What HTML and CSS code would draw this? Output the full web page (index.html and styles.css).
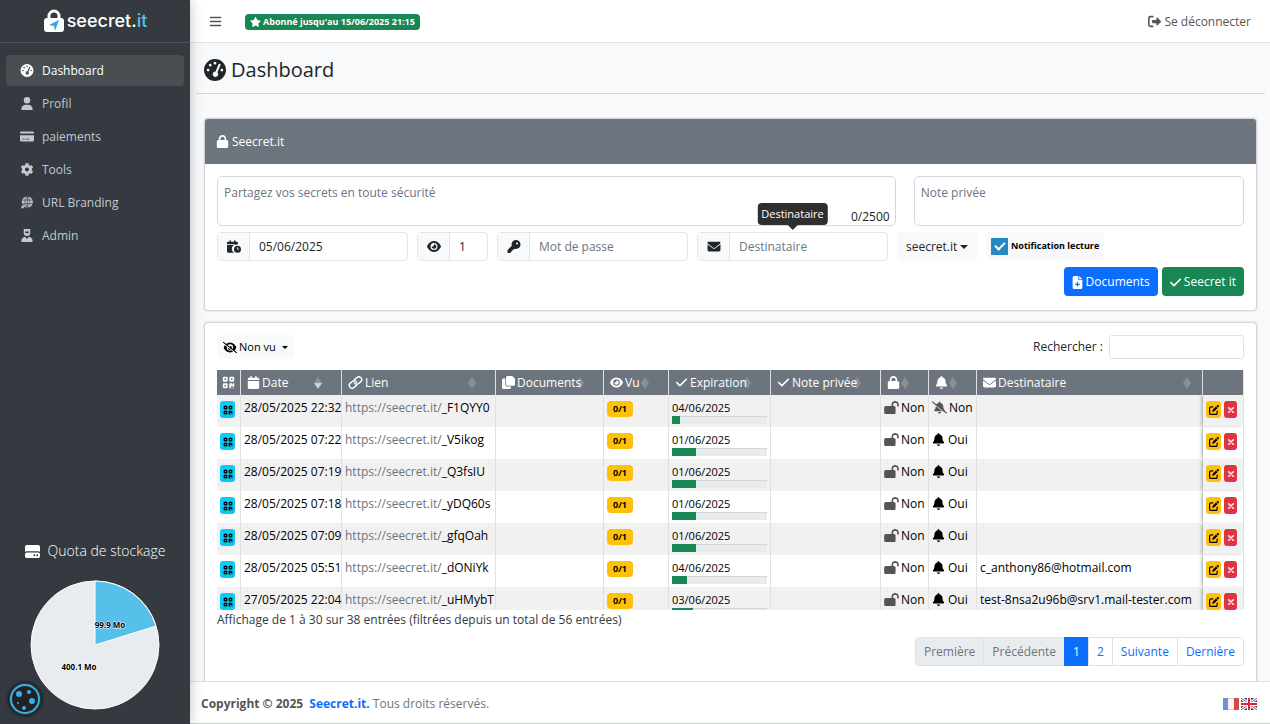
FILE: index.html
```
<!DOCTYPE html>
<html lang="fr">
<head>
    <meta charset="UTF-8">
    <meta name="viewport" content="width=device-width, initial-scale=1.0">
    <title>Seecret.it - Dashboard</title>
    <link rel="stylesheet" href="styles.css">
</head>
<body>

<!-- Icônes -->
<svg class="sprite" aria-hidden="true">
    <symbol id="i-lock" viewBox="0 0 448 512"><path d="M144 144v48H304V144c0-44.2-35.8-80-80-80s-80 35.8-80 80zM80 192V144C80 64.5 144.5 0 224 0s144 64.5 144 144v48h16c35.3 0 64 28.7 64 64V448c0 35.3-28.7 64-64 64H64c-35.3 0-64-28.7-64-64V256c0-35.3 28.7-64 64-64H80z"/></symbol>
    <symbol id="i-unlock" viewBox="0 0 576 512"><path d="M352 144c0-44 36-80 80-80s80 36 80 80v48c0 18 14 32 32 32s32-14 32-32v-48C576 64 512 0 432 0S288 64 288 144v48H64c-35 0-64 29-64 64v192c0 35 29 64 64 64h320c35 0 64-29 64-64V256c0-35-29-64-64-64h-32z"/></symbol>
    <symbol id="i-user" viewBox="0 0 448 512"><path d="M224 256A128 128 0 1 0 224 0a128 128 0 1 0 0 256zm-45.7 48C79.8 304 0 383.8 0 482.3C0 498.7 13.3 512 29.7 512H418.3c16.4 0 29.7-13.3 29.7-29.7C448 383.8 368.2 304 269.7 304H178.3z"/></symbol>
    <symbol id="i-admin" viewBox="0 0 448 512"><path fill-rule="evenodd" d="M96 0h256v150a128 128 0 0 1-256 0zM144 96v40l80 40 80-40V96zM150 304l74 90 74-90c86 8 150 80 150 178 0 17-13 30-30 30H30c-17 0-30-13-30-30 0-98 64-170 150-178z"/></symbol>
    <symbol id="i-check" viewBox="0 0 448 512"><path d="M438.6 105.4c12.5 12.5 12.5 32.8 0 45.3l-256 256c-12.5 12.5-32.8 12.5-45.3 0l-128-128c-12.5-12.5-12.5-32.8 0-45.3s32.8-12.5 45.3 0L160 338.7 393.4 105.4c12.5-12.5 32.8-12.5 45.3 0z"/></symbol>
    <symbol id="i-star" viewBox="0 0 576 512"><path d="M316.9 18C311.6 7 300.4 0 288.1 0s-23.4 7-28.8 18L195 150.3 51.4 171.5c-12 1.8-22 10.2-25.7 21.7s-.7 24.2 7.9 32.7L137.8 329 113.2 474.7c-2 12 3 24.2 12.9 31.3s23 8 33.8 2.3l128.3-68.5 128.3 68.5c10.8 5.7 23.9 4.9 33.8-2.3s14.9-19.3 12.9-31.3L438.5 329 542.7 225.9c8.6-8.5 11.7-21.2 7.9-32.7s-13.7-19.9-25.7-21.7L381.2 150.3 316.9 18z"/></symbol>
    <symbol id="i-bell" viewBox="0 0 448 512"><path d="M224 0c-17.7 0-32 14.3-32 32V51.2C119 66 64 130.6 64 208v18.8c0 47-17.3 92.4-48.5 127.6l-7.4 8.3c-8.4 9.4-10.4 22.9-5.3 34.4S19.4 416 32 416H416c12.6 0 24-7.4 29.2-18.9s3.1-25-5.3-34.4l-7.4-8.3C401.3 319.2 384 273.9 384 226.8V208c0-77.4-55-142-128-156.8V32c0-17.7-14.3-32-32-32zm45.3 493.3c12-12 18.7-28.3 18.7-45.3H160c0 17 6.7 33.3 18.7 45.3s28.3 18.7 45.3 18.7s33.3-6.7 45.3-18.7z"/></symbol>
    <symbol id="i-bell-slash" viewBox="0 0 640 512"><path d="M320 0c-18 0-32 14-32 32v19c-73 15-128 79-128 157v19c0 47-17 92-49 127l-7 8c-9 10-11 23-6 35s17 19 30 19h384c13 0 24-8 29-19s3-25-5-35l-8-8c-31-35-48-80-48-127v-19c0-78-55-142-128-157V32c0-18-14-32-32-32zM256 448c0 35 29 64 64 64s64-29 64-64z"/><path d="M40 70l580 456" stroke="#f1f1f2" stroke-width="50"/><path d="M24 24l592 464" stroke="currentColor" stroke-width="48" stroke-linecap="round"/></symbol>
    <symbol id="i-envelope" viewBox="0 0 512 512"><path d="M48 64C21.5 64 0 85.5 0 112c0 15.1 7.1 29.3 19.2 38.4L236.8 313.6c11.4 8.5 27 8.5 38.4 0L492.8 150.4c12.1-9.1 19.2-23.3 19.2-38.4c0-26.5-21.5-48-48-48H48zM0 176V384c0 35.3 28.7 64 64 64H448c35.3 0 64-28.7 64-64V176L294.4 339.2c-22.8 17.1-54 17.1-76.8 0L0 176z"/></symbol>
    <symbol id="i-key" viewBox="0 0 512 512"><path d="M336 352c97.2 0 176-78.8 176-176S433.2 0 336 0S160 78.8 160 176c0 18.7 2.9 36.8 8.3 53.7L7 391c-4.5 4.5-7 10.6-7 17v80c0 13.3 10.7 24 24 24h80c13.3 0 24-10.7 24-24V448h40c13.3 0 24-10.7 24-24V384h40c6.4 0 12.5-2.5 17-7l33.3-33.3c16.9 5.4 35 8.3 53.7 8.3zM376 96a40 40 0 1 1 0 80 40 40 0 1 1 0-80z"/></symbol>
    <symbol id="i-eye" viewBox="0 0 576 512"><path d="M288 32c-80.8 0-145.5 36.8-192.6 80.6C48.6 156 17.3 208 2.5 243.7c-3.3 7.9-3.3 16.7 0 24.6C17.3 304 48.6 356 95.4 399.4C142.5 443.2 207.2 480 288 480s145.5-36.8 192.6-80.6c46.8-43.5 78.1-95.4 93-131.1c3.3-7.9 3.3-16.7 0-24.6c-14.9-35.7-46.2-87.7-93-131.1C433.5 68.8 368.8 32 288 32zM144 256a144 144 0 1 1 288 0 144 144 0 1 1 -288 0zm144-64c0 35.3-28.7 64-64 64c-7.1 0-13.9-1.2-20.3-3.3c-5.5-1.8-11.9 1.6-11.7 7.4c.3 6.9 1.3 13.8 3.2 20.7c13.7 51.2 66.4 81.6 117.6 67.9s81.6-66.4 67.9-117.6c-11.1-41.5-47.8-69.4-88.6-71.1c-5.8-.2-9.2 6.1-7.4 11.7c2.1 6.4 3.3 13.2 3.3 20.3z"/></symbol>
    <symbol id="i-eye-slash" viewBox="0 0 640 512"><path fill-rule="evenodd" d="M320 32c-140 0-246 110-286 212-3 8-3 16 0 24 40 102 146 212 286 212s246-110 286-212c3-8 3-16 0-24C566 142 460 32 320 32zm0 80a144 144 0 1 1 0 288 144 144 0 1 1 0-288zm0 80a64 64 0 0 1-90 74 92 92 0 1 0 90-74z"/><path d="M10 60l592 464" stroke="#f8f9fa" stroke-width="56"/><path d="M24 24l592 464" stroke="currentColor" stroke-width="50" stroke-linecap="round"/></symbol>
    <symbol id="i-cog" viewBox="0 0 512 512"><path d="M487.4 315.7l-42.6-24.6c4.3-23.2 4.3-47 0-70.2l42.6-24.6c4.9-2.8 7.1-8.6 5.5-14-11.1-35.6-30-67.8-54.7-94.6-3.8-4.1-10-5.1-14.8-2.3L380.8 110c-17.9-15.4-38.5-27.3-60.8-35.1V25.8c0-5.6-3.9-10.5-9.4-11.7-36.7-8.2-74.3-7.8-109.2 0-5.5 1.2-9.4 6.1-9.4 11.7V75c-22.2 7.9-42.8 19.8-60.8 35.1L88.7 85.5c-4.9-2.8-11-1.9-14.8 2.3-24.7 26.7-43.6 58.9-54.7 94.6-1.7 5.4.6 11.2 5.5 14L67.3 221c-4.3 23.2-4.3 47 0 70.2l-42.6 24.6c-4.9 2.8-7.1 8.6-5.5 14 11.1 35.6 30 67.8 54.7 94.6 3.8 4.1 10 5.1 14.8 2.3l42.6-24.6c17.9 15.4 38.5 27.3 60.8 35.1v49.2c0 5.6 3.9 10.5 9.4 11.7 36.7 8.2 74.3 7.8 109.2 0 5.5-1.2 9.4-6.1 9.4-11.7v-49.2c22.2-7.9 42.8-19.8 60.8-35.1l42.6 24.6c4.9 2.8 11 1.9 14.8-2.3 24.7-26.7 43.6-58.9 54.7-94.6 1.5-5.5-.7-11.3-5.6-14.1zM256 336c-44.1 0-80-35.9-80-80s35.9-80 80-80 80 35.9 80 80-35.9 80-80 80z"/></symbol>
    <symbol id="i-gauge" viewBox="0 0 512 512"><path fill-rule="evenodd" d="M256 0a256 256 0 1 1 0 512 256 256 0 1 1 0-512zM256 64a32 32 0 1 0 0 64 32 32 0 1 0 0-64zM144 112a32 32 0 1 0 0 64 32 32 0 1 0 0-64zM96 224a32 32 0 1 0 0 64 32 32 0 1 0 0-64zM416 224a32 32 0 1 0 0 64 32 32 0 1 0 0-64zM371 112a24 24 0 0 0-31 12L268 290a64 64 0 1 0 44 19l71-166a24 24 0 0 0-12-31z"/></symbol>
    <symbol id="i-card" viewBox="0 0 576 512"><path fill-rule="evenodd" d="M64 48h448c35 0 64 20 64 50v34H0V98c0-30 29-50 64-50zM0 208h576v190c0 36-29 64-64 64H64c-35 0-64-28-64-64zM96 346v36h96v-36zM230 346v36h150v-36z"/></symbol>
    <symbol id="i-globe" viewBox="0 0 512 512"><circle cx="270" cy="236" r="220"/><path d="M50 160h440M50 300h440M270 10v450M270 16c-130 130-130 310 0 440M270 16c130 130 130 310 0 440" fill="none" stroke="#343a40" stroke-width="26"/><path d="M10 500l30-150 50 40 80-90 60 50-90 90 40 40z" stroke="#343a40" stroke-width="24"/></symbol>
    <symbol id="i-disk" viewBox="0 0 512 512"><path fill-rule="evenodd" d="M64 32h384c35 0 64 29 64 64v170c-19-11-41-17-64-17H64c-23 0-45 6-64 17V96c0-35 29-64 64-64zM64 288h384c35 0 64 29 64 64v64c0 35-29 64-64 64H64c-35 0-64-29-64-64v-64c0-35 29-64 64-64zM320 352a32 32 0 1 0 0 64 32 32 0 1 0 0-64zM416 352a32 32 0 1 0 0 64 32 32 0 1 0 0-64z"/></symbol>
    <symbol id="i-logout" viewBox="0 0 512 512"><path d="M190 448H96c-35 0-64-29-64-64V128c0-35 29-64 64-64h94" fill="none" stroke="currentColor" stroke-width="62" stroke-linecap="round"/><path d="M504 239L378 105c-18-18-50-6-50 22v65H192c-18 0-32 14-32 32v64c0 18 14 32 32 32h136v65c0 28 32 40 50 22l126-134c10-10 10-24 0-34z"/></symbol>
    <symbol id="i-calendar" viewBox="0 0 448 512"><path d="M96 32v32H48C21 64 0 85 0 112v48h448v-48c0-27-21-48-48-48h-48V32c0-18-14-32-32-32s-32 14-32 32v32H160V32c0-18-14-32-32-32S96 14 96 32zM448 192H0v272c0 27 21 48 48 48h352c27 0 48-21 48-48z"/></symbol>
    <symbol id="i-calendar-clock" viewBox="0 0 576 512"><path d="M96 32v32H48C21 64 0 85 0 112v48h448v-48c0-27-21-48-48-48h-48V32c0-18-14-32-32-32s-32 14-32 32v32H160V32c0-18-14-32-32-32S96 14 96 32zM448 192H0v272c0 27 21 48 48 48h250a176 176 0 0 1 150-320z"/><path fill-rule="evenodd" d="M432 224a144 144 0 1 1 0 288 144 144 0 1 1 0-288zM416 288v96h80v-32h-48v-64z"/></symbol>
    <symbol id="i-link" viewBox="0 0 640 512"><g fill="none" stroke="currentColor" stroke-width="62" stroke-linecap="round" transform="rotate(-40 320 256)"><path d="M300 376H160a120 120 0 0 1 0-240h110a120 120 0 0 1 118 140" transform="translate(-26 0)"/><path d="M340 136h140a120 120 0 0 1 0 240H370a120 120 0 0 1-118-140" transform="translate(26 0)"/></g></symbol>
    <symbol id="i-copy" viewBox="0 0 512 512"><path d="M224 0c-35 0-64 29-64 64v256c0 35 29 64 64 64h224c35 0 64-29 64-64V110L402 0zM64 96c-35 0-64 29-64 64v288c0 35 29 64 64 64h224c35 0 64-29 64-64v-32H224c-53 0-96-43-96-96V96z"/></symbol>
    <symbol id="i-file-plus" viewBox="0 0 384 512"><path fill-rule="evenodd" d="M64 0c-35 0-64 29-64 64v384c0 35 29 64 64 64h256c35 0 64-29 64-64V160H256c-18 0-32-14-32-32V0zM256 0v128h128zM168 240h48v64h64v48h-64v64h-48v-64h-64v-48h64z"/></symbol>
    <symbol id="i-qr" viewBox="0 0 448 512"><path fill-rule="evenodd" d="M48 32h96c27 0 48 21 48 48v96c0 27-21 48-48 48H48c-27 0-48-21-48-48V80c0-27 21-48 48-48zm16 64v64h64V96zM304 32h96c27 0 48 21 48 48v96c0 27-21 48-48 48h-96c-27 0-48-21-48-48V80c0-27 21-48 48-48zm16 64v64h64V96zM48 288h96c27 0 48 21 48 48v96c0 27-21 48-48 48H48c-27 0-48-21-48-48v-96c0-27 21-48 48-48zm16 64v64h64v-64zM256 288h110v48h32v-48h50v128h-112v-32h-16v96h-64zM352 448h32v32h-32zM416 448h32v32h-32z"/></symbol>
    <symbol id="i-edit" viewBox="0 0 512 512"><path d="M200 96H96c-35 0-64 29-64 64v256c0 35 29 64 64 64h256c35 0 64-29 64-64V312" fill="none" stroke="currentColor" stroke-width="62" stroke-linecap="round"/><path d="M410 20c22-22 56-22 78 0l4 4c22 22 22 56 0 78l-30 30-82-82zM358 72l82 82-166 166-114 32 32-114z"/></symbol>
    <symbol id="i-times" viewBox="0 0 384 512"><path d="M72 136l240 240M312 136L72 376" fill="none" stroke="currentColor" stroke-width="70" stroke-linecap="round"/></symbol>
    <symbol id="i-bars" viewBox="0 0 448 512"><path d="M24 96h400M24 256h400M24 416h400" fill="none" stroke="currentColor" stroke-width="56" stroke-linecap="round"/></symbol>
</svg>

<aside class="sidebar">
    <a class="brand" href="#">
        <svg class="brand-lock" viewBox="0 0 22 24"><path d="M6 11V7a5 5 0 0 1 10 0v4" fill="none" stroke="#fff" stroke-width="3"/><rect x="1" y="9" width="20" height="14" rx="3" fill="#fff"/><path d="M16 11L6 16l5 1 1 5z" fill="#35a9dc"/></svg>
        <span>seecret.<span class="brand-it">it</span></span>
    </a>
    <nav class="menu">
        <a class="menu-item active" href="#"><svg class="icon"><use href="#i-gauge"/></svg>Dashboard</a>
        <a class="menu-item" href="#"><svg class="icon"><use href="#i-user"/></svg>Profil</a>
        <a class="menu-item" href="#"><svg class="icon"><use href="#i-card"/></svg>paiements</a>
        <a class="menu-item" href="#"><svg class="icon"><use href="#i-cog"/></svg>Tools</a>
        <a class="menu-item" href="#"><svg class="icon"><use href="#i-globe"/></svg>URL Branding</a>
        <a class="menu-item" href="#"><svg class="icon"><use href="#i-admin"/></svg>Admin</a>
    </nav>
    <div class="quota">
        <h2><svg class="icon"><use href="#i-disk"/></svg>Quota de stockage</h2>
        <svg class="pie" viewBox="0 0 130 130">
            <circle cx="65" cy="65" r="64" fill="#e9ecef" stroke="#fff"/>
            <path d="M65 65V1A64 64 0 0 1 126 46z" fill="#56c0ea" stroke="#fff"/>
            <text x="80" y="48">99.9 Mo</text>
            <text x="49" y="90">400.1 Mo</text>
        </svg>
    </div>
    <button class="cookie" aria-label="Cookies">
        <svg viewBox="0 0 32 32"><circle cx="16" cy="16" r="14" fill="#222" stroke="#35b0e8" stroke-width="2"/><g fill="#35b0e8"><circle cx="10" cy="11" r="3"/><circle cx="20" cy="9" r="2"/><circle cx="23" cy="18" r="3"/><circle cx="15" cy="25" r="2"/><circle cx="9" cy="20" r="1"/></g></svg>
    </button>
</aside>

<div class="page">
    <header class="navbar">
        <button class="toggle" aria-label="Menu"><svg class="icon"><use href="#i-bars"/></svg></button>
        <span class="badge-sub"><svg class="icon"><use href="#i-star"/></svg>Abonné jusqu'au 15/06/2025 21:15</span>
        <a class="logout" href="#"><svg class="icon"><use href="#i-logout"/></svg>Se déconnecter</a>
    </header>

    <main class="content">
        <h1><svg class="icon"><use href="#i-gauge"/></svg>Dashboard</h1>

        <section class="card">
            <div class="card-header"><svg class="icon"><use href="#i-lock"/></svg>Seecret.it</div>
            <form class="card-body">
                <div class="row-text">
                    <div class="secret">
                        <textarea class="field" placeholder="Partagez vos secrets en toute sécurité" aria-label="Secret"></textarea>
                        <span class="counter">0/2500</span>
                    </div>
                    <textarea class="field" placeholder="Note privée" aria-label="Note privée"></textarea>
                </div>
                <div class="row-options">
                    <div class="group">
                        <label for="date"><svg class="icon"><use href="#i-calendar-clock"/></svg></label>
                        <input id="date" type="text" value="05/06/2025">
                    </div>
                    <div class="group small">
                        <label for="views"><svg class="icon"><use href="#i-eye"/></svg></label>
                        <input id="views" type="text" value="1">
                    </div>
                    <div class="group">
                        <label for="pass"><svg class="icon"><use href="#i-key"/></svg></label>
                        <input id="pass" type="text" placeholder="Mot de passe">
                    </div>
                    <div class="group">
                        <label for="dest"><svg class="icon"><use href="#i-envelope"/></svg></label>
                        <input id="dest" type="text" placeholder="Destinataire">
                        <div class="tooltip">Destinataire</div>
                    </div>
                    <div class="dropdown domain">
                        <select aria-label="Domaine"><option>seecret.it</option></select>
                    </div>
                    <label class="notif"><input type="checkbox" checked>Notification lecture</label>
                </div>
                <div class="row-buttons">
                    <button type="button" class="btn blue"><svg class="icon"><use href="#i-file-plus"/></svg>Documents</button>
                    <button type="button" class="btn green"><svg class="icon"><use href="#i-check"/></svg>Seecret it</button>
                </div>
            </form>
        </section>

        <section class="card list">
            <div class="card-body">
                <div class="toolbar">
                    <div class="dropdown filter">
                        <svg class="icon"><use href="#i-eye-slash"/></svg>
                        <select aria-label="Filtre"><option>Non vu</option></select>
                    </div>
                    <label class="search">Rechercher : <input type="text"></label>
                </div>
                <div class="table-scroll">
                    <table>
                        <thead>
                            <tr>
                                <th class="c-qr"><svg class="icon"><use href="#i-qr"/></svg></th>
                                <th class="c-date"><div class="th sorted"><span><svg class="icon"><use href="#i-calendar"/></svg>Date</span></div></th>
                                <th class="c-link"><div class="th"><span><svg class="icon wide"><use href="#i-link"/></svg>Lien</span></div></th>
                                <th class="c-docs"><div class="th"><span><svg class="icon"><use href="#i-copy"/></svg>Documents</span></div></th>
                                <th class="c-seen"><div class="th"><span><svg class="icon"><use href="#i-eye"/></svg>Vu</span></div></th>
                                <th class="c-exp"><div class="th"><span><svg class="icon"><use href="#i-check"/></svg>Expiration</span></div></th>
                                <th class="c-note"><div class="th"><span><svg class="icon"><use href="#i-check"/></svg>Note privée</span></div></th>
                                <th class="c-flag"><div class="th"><span><svg class="icon"><use href="#i-lock"/></svg></span></div></th>
                                <th class="c-flag"><div class="th"><span><svg class="icon"><use href="#i-bell"/></svg></span></div></th>
                                <th class="c-dest"><div class="th"><span><svg class="icon"><use href="#i-envelope"/></svg>Destinataire</span></div></th>
                                <th class="c-act"></th>
                            </tr>
                        </thead>
                        <tbody id="rows"></tbody>
                    </table>
                </div>
                <div class="info">Affichage de 1 à 30 sur 38 entrées (filtrées depuis un total de 56 entrées)</div>
                <nav class="pagination">
                    <a class="disabled" href="#">Première</a>
                    <a class="disabled" href="#">Précédente</a>
                    <a class="current" href="#">1</a>
                    <a href="#">2</a>
                    <a href="#">Suivante</a>
                    <a href="#">Dernière</a>
                </nav>
            </div>
        </section>
    </main>

    <footer class="footer">
        <div><strong>Copyright © 2025 <a href="#">Seecret.it.</a></strong> Tous droits réservés.</div>
        <div class="flags">
            <a href="#" aria-label="Français"><svg viewBox="0 0 16 12"><rect width="16" height="12" fill="#f4f4f4"/><rect width="5" height="12" fill="#6f8fd0"/><rect x="11" width="5" height="12" fill="#e0413c"/><rect x=".5" y=".5" width="15" height="11" fill="none" stroke="#8885" /></svg></a>
            <a href="#" aria-label="English"><svg viewBox="0 0 16 12"><rect width="16" height="12" fill="#3d5aa5"/><path d="M0 0l16 12M16 0L0 12" stroke="#fff" stroke-width="3"/><path d="M0 0l16 12M16 0L0 12" stroke="#d8404f"/><path d="M8 0v12M0 6h16" stroke="#fff" stroke-width="4"/><path d="M8 0v12M0 6h16" stroke="#d5283c" stroke-width="2"/></svg></a>
        </div>
    </footer>
</div>

<script src="script.js"></script>
</body>
</html>
```
FILE: styles.css
```
* {
    box-sizing: border-box;
}

body {
    display: flex;
    height: 100vh;
    margin: 0;
    overflow: hidden;
    font-family: "Open Sans", "Noto Sans", sans-serif;
    font-size: 12px;
    line-height: 18px;
    color: #212529;
    background-color: #f8f9fa;
}

a {
    color: #0d6efd;
    text-decoration: none;
}

button, input, select, textarea {
    font: inherit;
    color: inherit;
}

.sprite {
    position: absolute;
    width: 0;
    height: 0;
}

.icon {
    flex: none;
    width: 13px;
    height: 13px;
    fill: currentColor;
    vertical-align: -2px;
}

.icon.wide {
    width: 15px;
}

/* Menu latéral */
.sidebar {
    position: relative;
    display: flex;
    flex-direction: column;
    flex: none;
    width: 190px;
    background-color: #343a40;
    box-shadow: 0 0 12px rgba(0, 0, 0, 0.25);
}

.brand {
    display: flex;
    align-items: center;
    justify-content: center;
    height: 43px;
    border-bottom: 1px solid #4b545c;
    font-family: Inter, sans-serif;
    font-size: 18px;
    font-weight: 500;
    color: #fff;
}

.brand-lock {
    width: 22px;
    height: 24px;
    margin-right: 2px;
}

.brand-it {
    color: #56c0ea;
}

.menu {
    display: flex;
    flex-direction: column;
    gap: 2px;
    padding: 12px 6px;
}

.menu-item {
    display: flex;
    align-items: center;
    gap: 8px;
    height: 31px;
    padding: 0 14px;
    border-radius: 4px;
    color: #c2c7d0;
}

.menu-item .icon {
    width: 14px;
}

.menu-item.active {
    color: #fff;
    background-color: #494e53;
}

.quota {
    margin-top: auto;
    padding-bottom: 14px;
    text-align: center;
}

.quota h2 {
    display: flex;
    align-items: center;
    justify-content: center;
    gap: 8px;
    margin: 0 0 20px;
    font-size: 14px;
    font-weight: 300;
    color: #fff;
}

.quota .icon {
    width: 15px;
    height: 15px;
}

.pie {
    display: block;
    width: 130px;
    height: 130px;
    margin: 0 auto;
}

.pie text {
    font-size: 8px;
    font-weight: 700;
    text-anchor: middle;
    stroke: #fff;
    stroke-width: 1px;
    paint-order: stroke;
}

.cookie {
    position: absolute;
    left: 9px;
    bottom: 9px;
    width: 32px;
    height: 32px;
    padding: 0;
    border: none;
    border-radius: 50%;
    background: none;
    box-shadow: 0 0 4px #000;
}

.cookie svg {
    display: block;
}

/* Page */
.page {
    display: flex;
    flex-direction: column;
    flex: 1;
    min-width: 0;
}

.navbar {
    display: flex;
    align-items: center;
    flex: none;
    height: 43px;
    padding: 2px 19px 0;
    border-bottom: 1px solid #dee2e6;
    background-color: #fff;
    color: #555;
}

.toggle {
    padding: 0;
    border: none;
    background: none;
}

.badge-sub {
    display: flex;
    align-items: center;
    gap: 2px;
    height: 16px;
    margin-left: 23px;
    padding: 0 5px;
    border-radius: 4px;
    background-color: #198754;
    font-size: 9px;
    font-weight: 700;
    color: #fff;
}

.badge-sub .icon {
    width: 11px;
    height: 10px;
}

.logout {
    margin-left: auto;
    color: #555;
}

.logout .icon {
    margin-right: 3px;
}

.content {
    flex: 1;
    min-height: 0;
    overflow: hidden;
}

h1 {
    display: flex;
    align-items: center;
    gap: 5px;
    height: 51px;
    margin: 0 5px 24px 6px;
    padding: 3px 0 0 8px;
    border-bottom: 1px solid #d3d6da;
    font-size: 20px;
    font-weight: 400;
}

h1 .icon {
    width: 22px;
    height: 22px;
}

.card {
    margin: 0 13px 11px 14px;
    border: 1px solid #d3d5d8;
    border-radius: 4px;
    background-color: #fff;
    box-shadow: 0 0 2px rgba(0, 0, 0, 0.2);
}

.card-header {
    display: flex;
    align-items: center;
    gap: 3px;
    height: 45px;
    padding: 0 11px;
    border-radius: 3px 3px 0 0;
    background-color: #6c757d;
    color: #fff;
}

.card-body {
    padding: 12px;
}

/* La liste continue sous le pied de page */
.list {
    padding-bottom: 12px;
}

/* Formulaire */
.row-text {
    display: grid;
    grid-template-columns: 678fr 330fr;
    gap: 18px;
}

.secret {
    position: relative;
}

.field {
    display: block;
    width: 100%;
    height: 50px;
    padding: 7px 6px;
    border: 1px solid #d5d9de;
    border-radius: 5px;
    resize: none;
}

::placeholder {
    color: #6c757d;
    opacity: 1;
}

.counter {
    position: absolute;
    right: 6px;
    bottom: 0;
}

.row-options {
    display: flex;
    gap: 9px;
    margin-top: 6px;
}

.group {
    position: relative;
    display: flex;
    width: 191px;
    height: 29px;
    border: 1px solid #e3e6ea;
    border-radius: 4px;
}

.group.small {
    width: 71px;
}

.group label {
    display: flex;
    align-items: center;
    justify-content: center;
    flex: none;
    width: 32px;
    border-right: 1px solid #e3e6ea;
    background-color: #f8f9fa;
}

.group label .icon {
    width: 14px;
}

.group input {
    flex: 1;
    min-width: 0;
    padding: 1px 9px 0;
    border: none;
    border-radius: 4px;
    background: none;
}

.tooltip {
    position: absolute;
    left: 50%;
    bottom: calc(100% + 8px);
    height: 22px;
    padding: 2px 4px;
    border-radius: 4px;
    background-color: #2f2f2f;
    font-size: 11px;
    color: #fff;
    transform: translateX(-50%);
}

.tooltip::after {
    content: "";
    position: absolute;
    left: 50%;
    top: 100%;
    margin-left: -5px;
    border: 5px solid transparent;
    border-top-color: #2f2f2f;
    border-bottom: none;
}

.dropdown {
    display: flex;
    align-items: center;
    border-radius: 4px;
    background-color: #f8f9fa;
}

.dropdown select {
    padding: 0;
    border: none;
    background: none;
    appearance: none;
}

.dropdown::after {
    content: "";
    border: 4px solid transparent;
    border-top-color: currentColor;
    border-bottom: none;
}

.domain {
    gap: 2px;
    height: 29px;
    padding: 0 9px;
}

.notif {
    display: flex;
    align-items: center;
    gap: 3px;
    height: 28px;
    padding: 0 5px;
    border-radius: 4px;
    background-color: #f8f9fa;
    font-size: 9px;
    font-weight: 700;
    color: #000;
}

.notif input {
    display: flex;
    align-items: center;
    justify-content: center;
    width: 17px;
    height: 17px;
    margin: 0;
    background-color: #2489c5;
    appearance: none;
}

.notif input:checked::after {
    content: "";
    width: 8px;
    height: 4px;
    margin-bottom: 3px;
    border-left: 2px solid #fff;
    border-bottom: 2px solid #fff;
    transform: rotate(-45deg);
}

.row-buttons {
    display: flex;
    justify-content: flex-end;
    gap: 4px;
    margin: 6px 0 2px;
}

.btn {
    display: flex;
    align-items: center;
    gap: 3px;
    height: 29px;
    padding: 1px 8px 0;
    border: none;
    border-radius: 4px;
    color: #fff;
}

.btn.blue {
    background-color: #0d6efd;
}

.btn.green {
    background-color: #198754;
}

.btn .icon {
    width: 11px;
}

/* Liste */
.toolbar {
    display: flex;
    align-items: center;
    justify-content: space-between;
}

.filter {
    gap: 2px;
    height: 24px;
    padding: 0 6px;
    font-size: 11px;
    color: #000;
}

.filter .icon {
    width: 14px;
}

.filter select {
    padding-right: 4px;
}

.filter::after {
    border-width: 3px;
    border-bottom: none;
}

.search {
    display: flex;
    align-items: center;
    gap: 6px;
}

.search input {
    width: 135px;
    height: 24px;
    border: 1px solid #dee2e6;
    border-radius: 3px;
}

.table-scroll {
    height: 240px;
    margin-top: 11px;
    overflow: hidden;
}

table {
    width: 100%;
    border-collapse: separate;
    border-spacing: 0;
    table-layout: fixed;
    color: #000;
}

th, td {
    padding: 0 3px;
    border-right: 1px solid #dee2e6;
    text-align: left;
    white-space: nowrap;
}

th {
    height: 25px;
    padding: 1px 6px 0;
    background-color: #6c757d;
    font-weight: 400;
    color: #fff;
}

td {
    height: 32px;
    padding-top: 4px;
    vertical-align: top;
}

tbody tr:nth-child(odd) {
    background-color: #f1f1f2;
}

.c-qr { width: 24px; }
.c-date { width: 101px; }
.c-link { width: 154px; }
.c-docs { width: 108px; }
.c-seen { width: 65px; }
.c-exp { width: 102px; }
.c-note { width: 110px; }
.c-flag { width: 48px; }
.c-act { width: 41px; }

td.c-date {
    padding-right: 0;
}

th .icon {
    margin-right: 2px;
}

.th {
    display: flex;
    align-items: center;
    justify-content: space-between;
    padding-right: 13px;
}

.th > span {
    position: relative;
    z-index: 1;
    width: 0;
}

/* Flèches de tri */
.th::after {
    content: "";
    flex: none;
    width: 8px;
    height: 12px;
    background-color: #889097;
    clip-path: polygon(50% 0, 100% 50%, 50% 100%, 0 50%);
}

.th.sorted::after {
    background: linear-gradient(#8b9299 50%, #ced1d4 50%);
}

th.c-qr {
    padding: 1px 5px 0;
}

th.c-dest .th {
    padding-right: 5px;
}

.link-base {
    color: #6c757d;
}

.seen {
    display: inline-block;
    height: 16px;
    padding: 0 6px;
    border-radius: 4px;
    background-color: #ffc107;
    font-size: 9px;
    font-weight: 700;
    line-height: 16px;
}

td.c-exp {
    font-size: 11px;
}

.progress {
    height: 8px;
    margin-top: -1px;
    background-color: #e9ecef;
    box-shadow: inset 0 1px 1px rgba(0, 0, 0, 0.1);
}

.bar {
    height: 8px;
    background-color: #198754;
}

.muted {
    color: #555;
}

td .icon {
    margin-right: 3px;
}

td .icon.wide {
    margin-right: 2px;
}

.action {
    display: flex;
    align-items: center;
    justify-content: center;
    width: 15px;
    height: 17px;
    margin-top: 2px;
    padding: 0;
    border: none;
    border-radius: 3px;
}

td .action .icon {
    width: 10px;
    height: 10px;
    margin: 0;
}

.action.qr {
    background-color: #0dcaf0;
}

.action.edit {
    background-color: #ffc107;
}

.action.del {
    width: 13px;
    background-color: #dc3545;
    color: #fff;
}

.actions {
    display: flex;
    gap: 3px;
}

td.c-act {
    box-shadow: -3px 0 3px -1px rgba(0, 0, 0, 0.2);
}

.info {
    margin-top: 1px;
    color: #343a40;
}

.pagination {
    display: flex;
    justify-content: flex-end;
    margin-top: 8px;
}

.pagination a {
    height: 29px;
    margin-left: -1px;
    padding: 5px 8px;
    border: 1px solid #dee2e6;
    background-color: #fff;
}

.pagination a:first-child {
    border-radius: 4px 0 0 4px;
}

.pagination a:last-child {
    border-radius: 0 4px 4px 0;
}

.pagination a.disabled {
    color: #6c757d;
    background-color: #e9ecef;
}

.pagination a.current {
    border-color: #0d6efd;
    color: #fff;
    background-color: #0d6efd;
}

.footer {
    display: flex;
    align-items: center;
    justify-content: space-between;
    flex: none;
    height: 43px;
    padding: 3px 13px 0 11px;
    border-top: 1px solid #dee2e6;
    border-bottom: 1px solid #ced4da;
    background-color: #fff;
    color: #6c757d;
}

.footer strong {
    color: #555;
}

.footer strong a {
    margin: 0 0 0 3px;
}

.flags {
    display: flex;
    gap: 2px;
}

.flags svg {
    display: block;
    width: 16px;
    height: 12px;
}
```
FILE: script.js
```
const secrets = [
    { date: "28/05/2025 22:32", id: "_F1QYY0", exp: "04/06/2025", done: 8, notif: false, dest: "" },
    { date: "28/05/2025 07:22", id: "_V5ikog", exp: "01/06/2025", done: 25, notif: true, dest: "" },
    { date: "28/05/2025 07:19", id: "_Q3fsIU", exp: "01/06/2025", done: 25, notif: true, dest: "" },
    { date: "28/05/2025 07:18", id: "_yDQ60s", exp: "01/06/2025", done: 25, notif: true, dest: "" },
    { date: "28/05/2025 07:09", id: "_gfqOah", exp: "01/06/2025", done: 25, notif: true, dest: "" },
    { date: "28/05/2025 05:51", id: "_dONiYk", exp: "04/06/2025", done: 16, notif: true, dest: "c_anthony86@hotmail.com" },
    { date: "27/05/2025 22:04", id: "_uHMybT", exp: "03/06/2025", done: 22, notif: true, dest: "test-8nsa2u96b@srv1.mail-tester.com" }
];

function icon(name, cls = "") {
    return `<svg class="icon ${cls}"><use href="#i-${name}"/></svg>`;
}

// Une ligne du tableau par secret
document.getElementById("rows").innerHTML = secrets.map(s => `
    <tr>
        <td><button class="action qr" aria-label="QR code">${icon("qr")}</button></td>
        <td class="c-date">${s.date}</td>
        <td><span class="link-base">https://seecret.it/</span>${s.id}</td>
        <td></td>
        <td><span class="seen">0/1</span></td>
        <td class="c-exp">${s.exp}<div class="progress"><div class="bar" style="width: ${s.done}%"></div></div></td>
        <td></td>
        <td>${icon("unlock", "muted wide")}Non</td>
        <td>${s.notif ? icon("bell") + "Oui" : icon("bell-slash", "muted wide") + "Non"}</td>
        <td>${s.dest}</td>
        <td class="c-act"><div class="actions">
            <button class="action edit" aria-label="Modifier">${icon("edit")}</button>
            <button class="action del" aria-label="Supprimer">${icon("times")}</button>
        </div></td>
    </tr>`).join("");
```
